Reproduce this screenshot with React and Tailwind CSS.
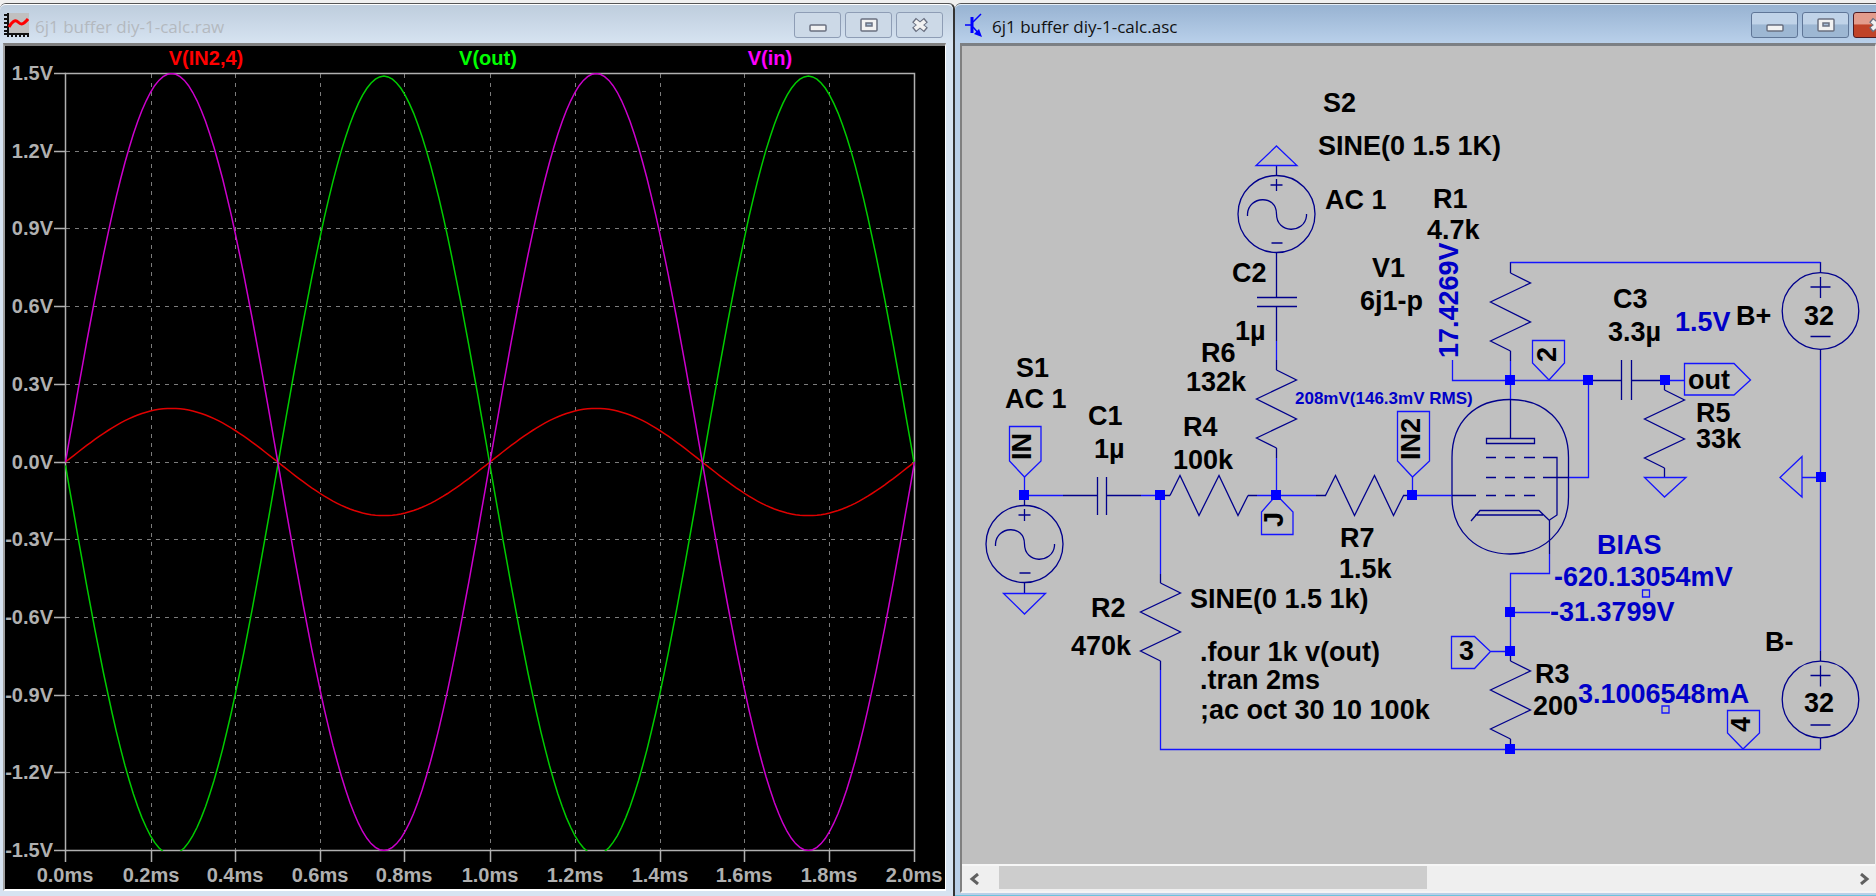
const X_TICKS = [65, 151, 235, 320, 404, 490, 575, 660, 744, 829, 914];
const X_LABELS = ["0.0ms", "0.2ms", "0.4ms", "0.6ms", "0.8ms", "1.0ms", "1.2ms", "1.4ms", "1.6ms", "1.8ms", "2.0ms"];
const Y_LABELS = ["1.5V", "1.2V", "0.9V", "0.6V", "0.3V", "0.0V", "-0.3V", "-0.6V", "-0.9V", "-1.2V", "-1.5V"];

const PLOT = { left: 65.5, right: 914.5, middle: 462 };

// amplitude in volts over two periods of 1 kHz
const trace = (amplitude, offset = 0) => {
    const points = [];
    for (let i = 0; i <= 200; i++) {
        const volts = amplitude * Math.sin((i / 200) * 4 * Math.PI) + offset;
        const x = PLOT.left + (i / 200) * (PLOT.right - PLOT.left);
        const y = PLOT.middle - (volts / 1.5) * 388.5;
        points.push(`${x.toFixed(1)},${y.toFixed(1)}`);
    }
    return points.join(" ");
};

const PlotIcon = () => (
    <svg viewBox="0 0 25 25" className="w-[25px] h-[25px]" aria-hidden="true">
        <rect x="4" y="0" width="21" height="21" fill="#c0c0c0" />
        <path d="M4 0V24M0 21H25" stroke="#111" strokeWidth="2" fill="none" />
        <path d="M0 2H4M0 6H4M0 10H4M0 14H4M0 18H4M8 21V24M12 21V24M16 21V24M20 21V24M24 21V24" stroke="#111" strokeWidth="2" />
        <path d="M5 14C8 9 11 6 14 9S19 12 24 6" stroke="#f00" strokeWidth="3" fill="none" />
    </svg>
);

const SchematicIcon = () => (
    <svg viewBox="0 0 18 25" className="w-[18px] h-[25px]" aria-hidden="true">
        <path d="M0 12H6M8 9L16 1M8 14L15 22" stroke="#00f" strokeWidth="1.5" fill="none" />
        <path d="M7 4V20" stroke="#00f" strokeWidth="3" />
        <path d="M17 24L9 21L14 16Z" fill="#00f" />
    </svg>
);

const MinimizeIcon = () => (
    <svg viewBox="0 0 18 16" className="w-[18px] h-4" aria-hidden="true">
        <rect x="1" y="8" width="16" height="6" rx="1" fill="#f2f2f2" stroke="#6a7080" strokeWidth="1.5" />
    </svg>
);

const MaximizeIcon = () => (
    <svg viewBox="0 0 18 16" className="w-[18px] h-4" aria-hidden="true">
        <rect x="1" y="2" width="16" height="12" rx="1" fill="#f2f2f2" stroke="#6a7080" strokeWidth="1.5" />
        <rect x="6" y="6" width="6" height="3" fill="#a9c0da" stroke="#6a7080" strokeWidth="1.5" />
    </svg>
);

const CloseIcon = () => (
    <svg viewBox="0 0 18 16" className="w-[18px] h-4" aria-hidden="true">
        <path d="M3 3L15 13M15 3L3 13" stroke="#6a7080" strokeWidth="6" />
        <path d="M4 4L14 12M14 4L4 12" stroke="#f2f2f2" strokeWidth="4" />
    </svg>
);

const TitleButton = ({ label, className, children }) => (
    <button aria-label={label} className={`flex items-center justify-center w-[47px] h-[26px] shrink-0 rounded-[3px] border ${className}`}>
        {children}
    </button>
);

const PlotWindow = () => (
    <section className="flex flex-col min-w-0 min-h-0 bg-[#d6e3f1] border-t border-r-2 border-t-[#555] border-r-[#333] rounded-t-md pl-[3px] pr-[7px] pb-[5px]">
        <header className="flex items-center justify-between h-[39px] shrink-0 border-t border-white bg-gradient-to-b from-[#becddd] to-[#d6e3f1] -ml-[3px] -mr-[7px] pt-[2px] pl-1 pr-[10px] rounded-t-md">
            <div className="flex items-center gap-[6px]">
                <PlotIcon />
                <h1 className="font-['Open_Sans',sans-serif] text-[17px] leading-6 pt-[3px] text-[#b4b9bf] whitespace-nowrap">6j1 buffer diy-1-calc.raw</h1>
            </div>
            <div className="flex gap-1">
                <TitleButton label="Minimize" className="border-[#8e9db5] bg-[#ccd9e7]"><MinimizeIcon /></TitleButton>
                <TitleButton label="Maximize" className="border-[#8e9db5] bg-[#ccd9e7]"><MaximizeIcon /></TitleButton>
                <TitleButton label="Close" className="border-[#8e9db5] bg-[#ccd9e7]"><CloseIcon /></TitleButton>
            </div>
        </header>
        <div className="flex-1 min-h-0 border-t-[3px] border-l-2 border-r border-b-2 border-t-[#808080] border-l-[#a0a0a0] border-r-white border-b-white bg-black">
            <Plot />
        </div>
    </section>
);

const Plot = () => (
    <svg viewBox="5 46 940 843" className="block w-full h-full font-['Liberation_Sans',sans-serif] font-bold text-[20px]" role="img" aria-label="Voltage against time">
        <clipPath id="plot-area">
            <rect x="65" y="73" width="850" height="778" />
        </clipPath>
        <g stroke="#7c7c7c" strokeWidth="1" strokeDasharray="4 5" shapeRendering="crispEdges">
            {X_TICKS.slice(1, -1).map((x) => <path key={x} d={`M${x}.5 74V851`} />)}
            {Y_LABELS.slice(1, -1).map((label, i) => (
                <path key={label} d={`M66 ${Math.round(73 + (i + 1) * 77.7)}.5H915`} />
            ))}
        </g>
        <g stroke="#b0b0b0" strokeWidth="1.5" fill="none">
            <rect x="65.5" y="73.5" width="849" height="777" />
            {X_TICKS.map((x) => <path key={x} d={`M${x}.5 851V862`} />)}
            {Y_LABELS.map((label, i) => <path key={label} d={`M54 ${Math.round(73 + i * 77.7)}.5H66`} />)}
        </g>
        <g fill="none" strokeWidth="1.5" clipPath="url(#plot-area)">
            <polyline points={trace(0.207)} stroke="#e00000" />
            <polyline points={trace(-1.503, -0.013)} stroke="#00cc00" />
            <polyline points={trace(1.5)} stroke="#cc00cc" />
        </g>
        <g fill="#b0b0b0">
            {Y_LABELS.map((label, i) => (
                <text key={label} x="53" y={Math.round(80 + i * 77.7)} textAnchor="end">{label}</text>
            ))}
            {X_LABELS.map((label, i) => (
                <text key={label} x={X_TICKS[i]} y="882" textAnchor="middle">{label}</text>
            ))}
        </g>
        <text x="206" y="65" textAnchor="middle" fill="#f00">V(IN2,4)</text>
        <text x="488" y="65" textAnchor="middle" fill="#0f0">V(out)</text>
        <text x="770" y="65" textAnchor="middle" fill="#f0f">V(in)</text>
    </svg>
);

const Resistor = ({ x, y, rotate = 0 }) => (
    <path d="M0 0L20 10L-20 29L20 49L-20 68L0 78" transform={`translate(${x} ${y}) rotate(${rotate})`} />
);

const AcSource = ({ x, y }) => (
    <g transform={`translate(${x} ${y})`}>
        <circle r="38.5" />
        <path d="M-6 -29H6M0 -35V-23M-5 29H6" />
        <path d="M-29 2V0C-28 -18 0 -20 0 0C0 20 28 20 30 2V0" />
    </g>
);

const DcSource = ({ x, y }) => (
    <g transform={`translate(${x} ${y})`}>
        <circle r="38.3" />
        <path d="M-10 -24H10M0 -34V-13M-10 25.5H10" />
    </g>
);

const NODES = [
    [1024, 495], [1160, 495], [1276, 495], [1412, 495],
    [1510, 380], [1588, 380], [1665, 380], [1821, 477],
    [1510, 612], [1510, 651], [1510, 749],
];

const LABELS = [
    ["S2", 1323, 112], ["SINE(0 1.5 1K)", 1318, 155], ["AC 1", 1325, 209],
    ["R1", 1433, 208], ["4.7k", 1427, 239], ["V1", 1372, 277], ["6j1-p", 1360, 310],
    ["C2", 1232, 282], ["1µ", 1235, 340], ["R6", 1201, 362], ["132k", 1186, 391],
    ["S1", 1016, 377], ["AC 1", 1005, 408], ["C1", 1088, 425], ["1µ", 1094, 458],
    ["R4", 1183, 436], ["100k", 1173, 469], ["R7", 1340, 547], ["1.5k", 1339, 578],
    ["SINE(0 1.5 1k)", 1190, 608], ["R2", 1091, 617], ["470k", 1071, 655],
    [".four 1k v(out)", 1200, 661], [".tran 2ms", 1200, 689], [";ac oct 30 10 100k", 1200, 719],
    ["C3", 1613, 308], ["3.3µ", 1608, 341], ["B+", 1736, 325], ["32", 1804, 325],
    ["out", 1688, 389], ["R5", 1696, 422], ["33k", 1696, 448],
    ["3", 1459, 660], ["R3", 1535, 683], ["200", 1533, 715], ["B-", 1765, 651], ["32", 1804, 712],
];

const READINGS = [
    ["1.5V", 1675, 331], ["BIAS", 1597, 554], ["-620.13054mV", 1554, 586],
    ["-31.3799V", 1550, 621], ["3.1006548mA", 1578, 703],
];

// net names written upwards
const UPRIGHT = [["IN", 1031, 460], ["IN2", 1420, 460], ["2", 1556, 362], ["J", 1283, 527], ["4", 1750, 732]];

const Schematic = () => (
    <svg viewBox="962 46 913 818" className="block w-full h-full font-['Liberation_Sans',sans-serif] font-bold text-[27px]" role="img" aria-label="6j1 buffer schematic">
        <g stroke="#00008c" strokeWidth="1.3" fill="none">
            <AcSource x={1276.5} y={214} />
            <AcSource x={1024.5} y={544} />
            <DcSource x={1820.5} y={311} />
            <DcSource x={1820.5} y={699.5} />
            <Resistor x={1276.5} y={370} />
            <Resistor x={1160.5} y={583} />
            <Resistor x={1510.5} y={273} />
            <Resistor x={1664.5} y={390} />
            <Resistor x={1510.5} y={661} />
            <Resistor x={1170} y={495.5} rotate={-90} />
            <Resistor x={1325.5} y={495.5} rotate={-90} />
            {/* capacitors */}
            <path d="M1097.5 477V515M1106.5 477V515M1063 495.5H1097M1107 495.5H1141" />
            <path d="M1257 297.5H1297M1257 306.5H1297M1276.5 252V297M1276.5 307V341" />
            <path d="M1621.5 360V400M1631.5 360V400M1589 380.5H1621M1632 380.5H1664" />
            {/* component leads */}
            <path d="M1276.5 165V175M1024.5 495V505M1024.5 583V593M1160.5 495.5H1170M1248 495.5H1257M1403 495.5H1412M1316 495.5H1326" />
            <path d="M1276.5 360V370M1276.5 448V458M1160.5 574V583M1160.5 661V670M1510.5 262V273M1510.5 351V361M1664.5 380V390M1664.5 468V477M1510.5 651V661M1510.5 739V749" />
            <path d="M1820.5 262V273M1820.5 349V360M1820.5 651V661M1820.5 738V749" />
            {/* pentode */}
            <path d="M1452 457.5C1452 421 1476 399.5 1510 399.5S1568.5 421 1568.5 457.5V497C1568.5 532 1543 554 1510 554S1452 532 1452 497Z" />
            <path d="M1510.5 399V438M1486.5 438.5H1534.5V443.5H1486.5Z" />
            <path d="M1486 457.5H1496M1505 457.5H1515M1524 457.5H1535M1543 457.5H1557V515L1549.5 520" />
            <path d="M1486 477.5H1496M1505 477.5H1515M1524 477.5H1535M1543 477.5H1569" />
            <path d="M1452 495.5H1476M1486 495.5H1496M1505 495.5H1515M1524 495.5H1535" />
            <path d="M1471 521L1480 510.5H1539L1549.5 520.5V554M1475 515H1543" />
        </g>
        <g stroke="#1414ff" strokeWidth="1.3" fill="none">
            <path d="M1024.5 477V495.5H1063M1141 495.5H1160.5V574M1257 495.5H1316M1276.5 341V360M1276.5 458V495M1412.5 477V495.5H1452" />
            <path d="M1160.5 670V749.5H1820.5M1510.5 262.5H1820.5M1820.5 360V651M1452.5 360V380.5H1588.5V477.5H1569M1510.5 361V399M1664.5 380.5H1684" />
            <path d="M1549.5 554V573.5H1510.5V651M1510.5 612.5H1550M1491 651.5H1510M1802 477.5H1820" />
            {/* grounds */}
            <path d="M1276.5 146L1297 165.5H1256Z" />
            <path d="M1003.5 593.5H1045.5L1024.5 614Z" />
            <path d="M1644.5 477.5H1686L1664.5 497Z" />
            <path d="M1802 456.5V497L1780 477.5Z" />
            {/* net flags */}
            <path d="M1009.5 426.5H1041V461L1024.5 477L1009.5 461Z" />
            <path d="M1397.5 411.5H1429.5V461L1412.5 477L1397.5 461Z" />
            <path d="M1532.5 340.5H1564.5V363L1549 380L1532.5 363Z" />
            <path d="M1261.5 534.5H1293V512L1276.5 495L1261.5 512Z" />
            <path d="M1684.5 363.5V395H1734L1750.5 380L1734 363.5Z" />
            <path d="M1451.5 636.5V668.5H1474.5L1490.5 651.5L1474.5 636.5Z" />
            <path d="M1727.5 710.5H1759.5V733L1743 749L1727.5 733Z" />
            <path d="M1642.5 590H1649.5V597H1642.5ZM1662 706H1669V713H1662Z" />
        </g>
        <g fill="#00f">
            {NODES.map(([x, y]) => <rect key={`${x}-${y}`} x={x - 5} y={y - 5} width="10" height="10" />)}
        </g>
        <g fill="#000">
            {LABELS.map(([label, x, y]) => <text key={`${x}-${y}`} x={x} y={y}>{label}</text>)}
            {UPRIGHT.map(([label, x, y]) => <text key={label} transform={`translate(${x} ${y}) rotate(-90)`}>{label}</text>)}
        </g>
        <g fill="#0000c8">
            {READINGS.map(([label, x, y]) => <text key={label} x={x} y={y}>{label}</text>)}
            <text transform="translate(1458 358) rotate(-90)">17.4269V</text>
            <text x="1295" y="404" className="text-[17px]">208mV(146.3mV RMS)</text>
        </g>
    </svg>
);

const SchematicWindow = () => (
    <section className="flex flex-col min-w-0 min-h-0 overflow-hidden bg-[#b9cfe8] border-t border-t-[#555] border-b border-b-[#6cc4dc] rounded-tl-md pl-[5px] pb-[2px]">
        <header className="flex items-center justify-between h-[39px] shrink-0 border-t border-[#e6eef7] bg-gradient-to-b from-[#98b3d2] to-[#b9d0ea] -ml-[5px] pt-[2px] pl-[10px] rounded-tl-md overflow-hidden">
            <div className="flex items-center gap-[9px]">
                <SchematicIcon />
                <h1 className="font-['Open_Sans',sans-serif] text-[17px] leading-6 pt-[3px] text-[#111] whitespace-nowrap">6j1 buffer diy-1-calc.asc</h1>
            </div>
            <div className="flex gap-1 -mr-[24px]">
                <TitleButton label="Minimize" className="border-[#5f7697] bg-gradient-to-b from-[#c0d3e8] from-45% to-[#9db7d3] to-50%"><MinimizeIcon /></TitleButton>
                <TitleButton label="Maximize" className="border-[#5f7697] bg-gradient-to-b from-[#c0d3e8] from-45% to-[#9db7d3] to-50%"><MaximizeIcon /></TitleButton>
                <TitleButton label="Close" className="border-[#4d1a22] bg-gradient-to-b from-[#e39c8c] from-45% to-[#c04328] to-50%"><CloseIcon /></TitleButton>
            </div>
        </header>
        <div className="flex flex-col flex-1 min-h-0 border-t-[3px] border-l-2 border-r border-b-2 border-t-[#7c8084] border-l-[#808080] border-r-[#eee] border-b-[#f4f4f4] bg-[#c0c0c0]">
            <div className="flex-1 min-h-0">
                <Schematic />
            </div>
            <div className="flex h-[27px] shrink-0 border-t-2 border-[#f6f6f6] bg-[#efefef]">
                <button aria-label="Scroll left" className="flex items-center justify-center w-[37px] shrink-0 pr-[14px]">
                    <svg viewBox="0 0 10 12" className="w-[10px] h-3" aria-hidden="true"><path d="M9 1L3 6L9 11" stroke="#606060" strokeWidth="3" fill="none" /></svg>
                </button>
                <div className="flex-1 pb-[2px]">
                    <div className="w-1/2 h-full bg-[#cdcdcd]" />
                </div>
                <button aria-label="Scroll right" className="flex items-center justify-center w-[20px] shrink-0">
                    <svg viewBox="0 0 10 12" className="w-[10px] h-3" aria-hidden="true"><path d="M1 1L7 6L1 11" stroke="#606060" strokeWidth="3" fill="none" /></svg>
                </button>
            </div>
        </div>
    </section>
);

export default function App() {
    return (
        <main className="grid grid-cols-[955fr_921fr] grid-rows-[minmax(0,1fr)] h-screen pt-[3px] bg-[#f0f0f0]">
            <PlotWindow />
            <SchematicWindow />
        </main>
    );
}
